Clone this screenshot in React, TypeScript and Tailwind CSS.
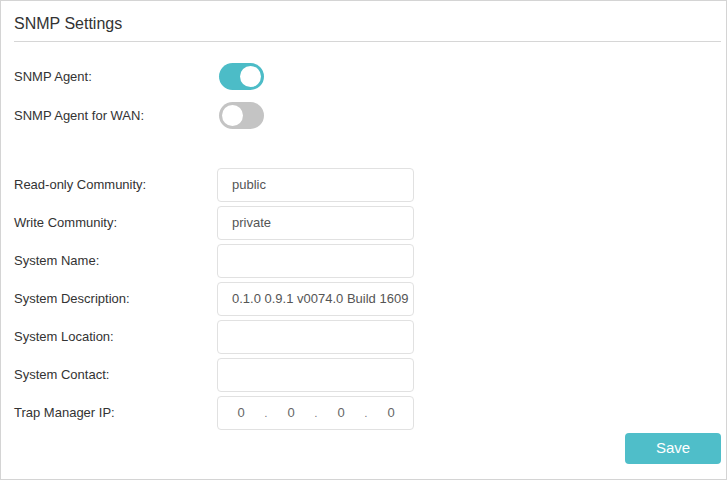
import React from "react";

const font = { fontFamily: '"Liberation Sans", Arial, sans-serif' };

function Toggle({ on }: { on: boolean }) {
  return (
    <div
      className={`ml-[2px] flex h-[27px] w-[45px] items-center rounded-full px-[3px] ${
        on ? "justify-end bg-[#4cbcc7]" : "justify-start bg-[#c4c4c4]"
      }`}
    >
      <div className="h-[21px] w-[21px] rounded-full bg-white" />
    </div>
  );
}

function Field({ value }: { value?: string }) {
  return (
    <div className="flex h-[34px] w-[197px] items-center overflow-hidden whitespace-nowrap rounded-[4px] border border-[#e1e1e1] px-[14px] text-[13px] text-[#555]">
      {value}
    </div>
  );
}

function IpField() {
  return (
    <div className="flex h-[34px] w-[197px] items-center rounded-[4px] border border-[#e1e1e1] pl-[19px] text-[13px] text-[#666]">
      <span className="w-[8px] text-center">0</span>
      <span className="w-[42px] text-center text-[10px]">.</span>
      <span className="w-[8px] text-center">0</span>
      <span className="w-[42px] text-center text-[10px]">.</span>
      <span className="w-[8px] text-center">0</span>
      <span className="w-[42px] text-center text-[10px]">.</span>
      <span className="w-[8px] text-center">0</span>
    </div>
  );
}

const fields: { label: string; value?: string }[] = [
  { label: "Read-only Community:", value: "public" },
  { label: "Write Community:", value: "private" },
  { label: "System Name:" },
  { label: "System Description:", value: "0.1.0 0.9.1 v0074.0 Build 1609" },
  { label: "System Location:" },
  { label: "System Contact:" },
];

export default function App() {
  return (
    <div
      style={font}
      className="flex h-[480px] w-[727px] flex-col border border-[#d4d4d4] bg-white pl-[13px] pr-[5px] text-[#333]"
    >
      {/* header */}
      <div className="h-[41px] border-b border-[#d6d6d6] pt-[14px] text-[16px] leading-[18px] text-[#333]">
        SNMP Settings
      </div>

      {/* toggles */}
      <div className="mt-[21px] flex flex-col gap-[12px] text-[13px]">
        <div className="flex h-[27px] items-center">
          <span className="w-[203px]">SNMP Agent:</span>
          <Toggle on />
        </div>
        <div className="flex h-[27px] items-center">
          <span className="w-[203px]">SNMP Agent for WAN:</span>
          <Toggle on={false} />
        </div>
      </div>

      {/* fields */}
      <div className="mt-[39px] flex flex-col gap-[4px] text-[13px]">
        {fields.map((f) => (
          <div key={f.label} className="flex items-center">
            <span className="w-[203px]">{f.label}</span>
            <Field value={f.value} />
          </div>
        ))}
        <div className="flex items-center">
          <span className="w-[203px]">Trap Manager IP:</span>
          <IpField />
        </div>
      </div>

      <div className="mt-[3px] flex justify-end">
        <button className="h-[31px] w-[96px] rounded-[4px] bg-[#4fbec9] text-[15px] text-white">
          Save
        </button>
      </div>
    </div>
  );
}
